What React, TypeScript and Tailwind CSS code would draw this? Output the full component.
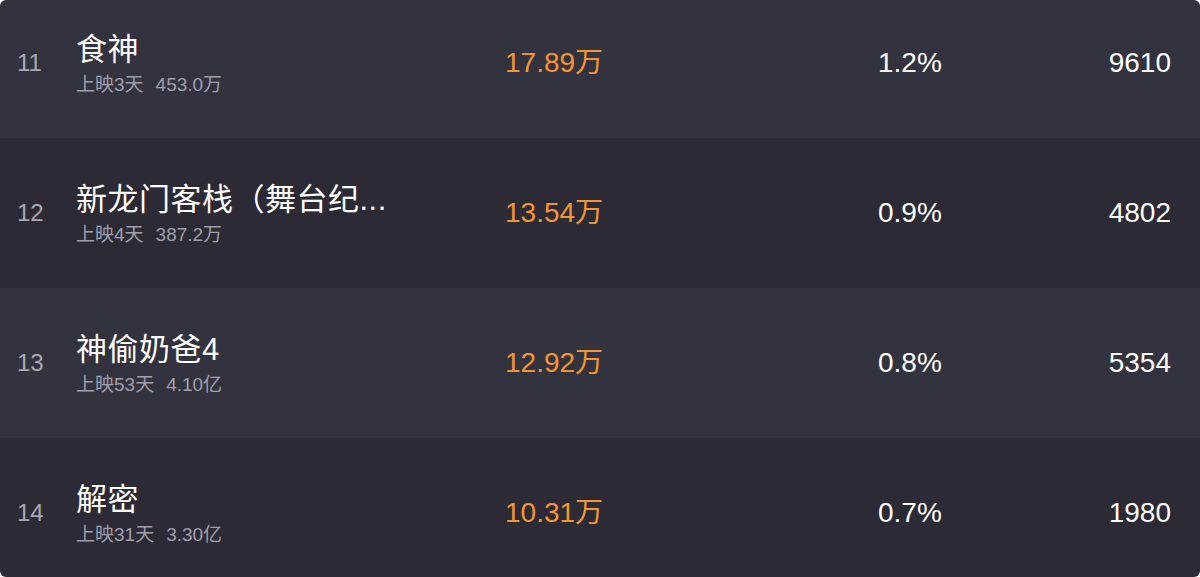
const rows = [
  { rank: 11, title: "食神", days: "上映3天", total: "453.0万", box: "17.89万", share: "1.2%", shows: "9610" },
  { rank: 12, title: "新龙门客栈（舞台纪...", days: "上映4天", total: "387.2万", box: "13.54万", share: "0.9%", shows: "4802" },
  { rank: 13, title: "神偷奶爸4", days: "上映53天", total: "4.10亿", box: "12.92万", share: "0.8%", shows: "5354" },
  { rank: 14, title: "解密", days: "上映31天", total: "3.30亿", box: "10.31万", share: "0.7%", shows: "1980" },
];

export default function App() {
  return (
    <div className="h-[577px] w-[1200px] bg-white">
      <div
        className="h-full w-full overflow-hidden rounded-md text-white"
        style={{ fontFamily: '"Liberation Sans", "Noto Sans CJK SC", sans-serif' }}
      >
        {rows.map((r, i) => (
          <div
            key={r.rank}
            className={`grid h-[150px] grid-cols-[76px_429px_373px_1fr] items-center ${
              i === 0 ? "-mt-[12px]" : ""
            } ${i % 2 === 0 ? "bg-[#33323f]" : "bg-[#2b2a35]"}`}
          >
            <div className="pl-[17px] text-[24px] text-[#a9a8b2]">{r.rank}</div>
            <div className="mt-[1px] flex flex-col">
              <div className="text-[31px] leading-[40px] whitespace-nowrap tracking-[0.5px]">{r.title}</div>
              <div className="mt-[3px] flex text-[19px] leading-[24px] text-[#a09fab]">
                <span>{r.days}</span>
                <span className="ml-3">{r.total}</span>
              </div>
            </div>
            <div className="text-[28px] text-[#f39530]">{r.box}</div>
            <div className="flex items-center justify-between pr-[29px] text-[28px]">
              <span>{r.share}</span>
              <span>{r.shows}</span>
            </div>
          </div>
        ))}
      </div>
    </div>
  );
}
